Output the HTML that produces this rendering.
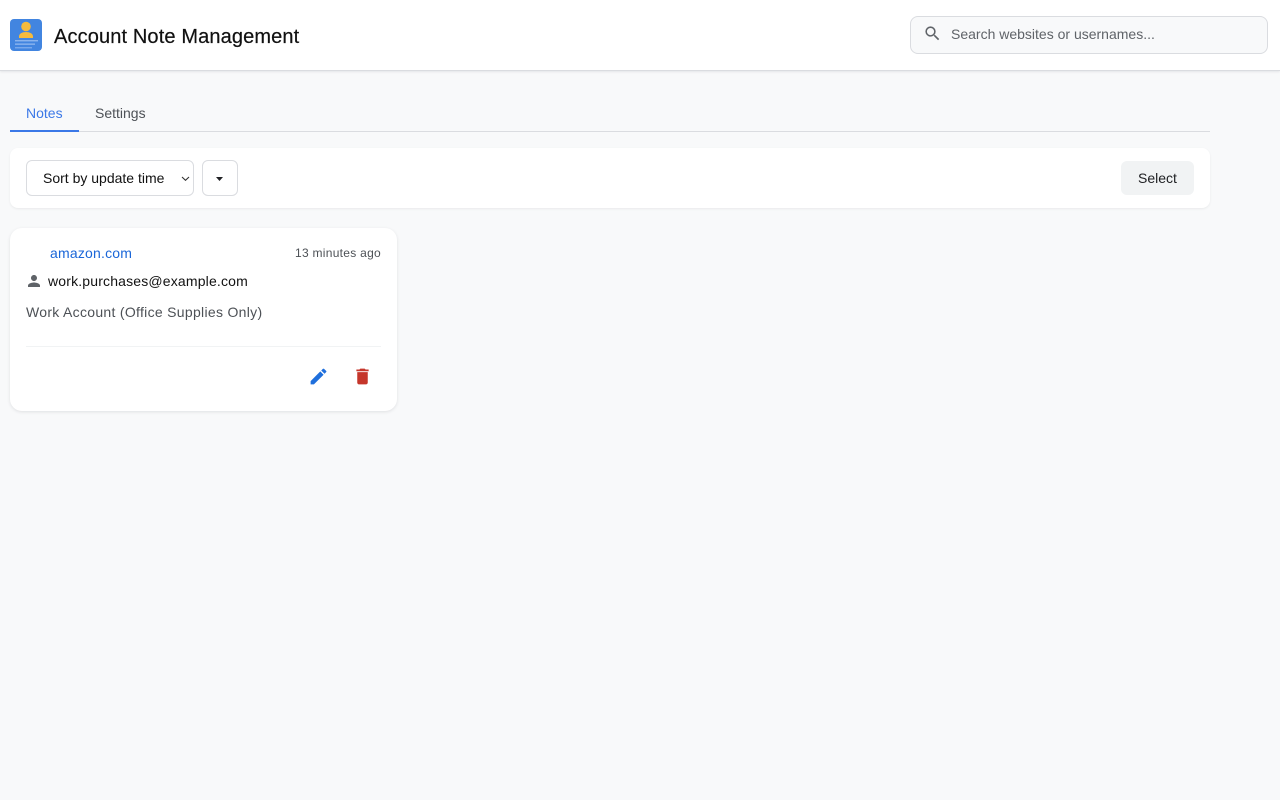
<!DOCTYPE html>
<html><head><meta charset="utf-8"><title>Account Note Management</title>
<style>
*{box-sizing:border-box}
html,body{margin:0;padding:0;width:1280px;height:800px;overflow:hidden;background:#f8f9fa;font-family:"Liberation Sans",sans-serif;color:#202124}
.abs{position:absolute;white-space:nowrap}
svg{position:absolute;display:block}
</style></head><body>
<div class="abs" style="left:0;top:0;width:1280px;height:71px;background:#fff;border-bottom:1px solid #dadce0;box-shadow:0 1px 2px rgba(60,64,67,.1)"></div>
<svg style="left:10px;top:19px" width="32" height="32" viewBox="0 0 32 32"><rect width="32" height="32" rx="4" fill="#4285e0"/><circle cx="16" cy="7.500" r="4.800" fill="#f6bb3c"/><path d="M9 19v-1.500c0-3 3.500-4.500 7-4.500s7 1.500 7 4.500V19z" fill="#f6bb3c"/><rect x="5" y="21.300" width="23" height="1" fill="#a9c8f5"/><rect x="5" y="24.600" width="20" height="1" fill="#a9c8f5"/><rect x="5" y="28.300" width="17" height="1" fill="#8fb7f0"/></svg>
<div class="abs" style="left:54px;top:25px;font-size:20px;line-height:24px;color:#111;letter-spacing:.13px;-webkit-text-stroke:.2px #111">Account Note Management</div>

<div class="abs" style="left:910px;top:16px;width:358px;height:38px;background:#f8f9fa;border:1px solid #dadce0;border-radius:8px"></div>
<svg style="left:922.500px;top:24px" width="19" height="19" viewBox="0 0 24 24"><path fill="#5f6368" d="M15.500 14h-.79l-.28-.27A6.470 6.470 0 0 0 16 9.500 6.500 6.500 0 1 0 9.500 16c1.610 0 3.090-.59 4.230-1.570l.27.28v.79l5 4.990L20.490 19l-4.990-5zm-6 0C7.010 14 5 11.990 5 9.500S7.010 5 9.500 5 14 7.010 14 9.500 11.990 14 9.500 14z"/></svg>
<div class="abs" style="left:951px;top:26px;font-size:14px;line-height:17px;color:#5f6368;letter-spacing:0">Search websites or usernames...</div>

<div class="abs" style="left:10px;top:131px;width:1200px;height:1px;background:#dadce0"></div>
<div class="abs" style="left:10px;top:130px;width:69px;height:2px;background:#3b78e7"></div>
<div class="abs" style="left:26px;top:105px;font-size:14px;line-height:17px;color:#3b78e7">Notes</div>
<div class="abs" style="left:95px;top:105px;font-size:14px;line-height:17px;color:#4d5156">Settings</div>

<div class="abs" style="left:10px;top:148px;width:1200px;height:60px;background:#fff;border-radius:8px;box-shadow:0 1px 2px rgba(60,64,67,.08)"></div>
<div class="abs" style="left:26px;top:160px;width:168px;height:36px;background:#fff;border:1px solid #dadce0;border-radius:6px"></div>
<div class="abs" style="left:43px;top:170px;font-size:14px;line-height:17px;color:#111;letter-spacing:0">Sort by update time</div>
<svg style="left:180.500px;top:176px" width="9" height="5" viewBox="0 0 9 5"><path d="M1 1l3.500 3.300L8 1" fill="none" stroke="#333" stroke-width="1.100"/></svg>
<div class="abs" style="left:201.500px;top:160px;width:36px;height:36px;background:#fff;border:1px solid #dadce0;border-radius:6px"></div>
<svg style="left:216px;top:176.500px" width="7" height="4" viewBox="0 0 7 4"><path d="M0 0h7L3.500 4z" fill="#202124"/></svg>
<div class="abs" style="left:1121px;top:161px;width:73px;height:34px;background:#f1f3f4;border-radius:6px"></div>
<div class="abs" style="left:1138px;top:170px;font-size:14px;line-height:17px;color:#202124">Select</div>

<div class="abs" style="left:10px;top:228px;width:386.500px;height:183px;background:#fff;border-radius:12px;box-shadow:0 1px 3px rgba(60,64,67,.13)"></div>
<div class="abs" style="left:50px;top:245px;font-size:14px;line-height:17px;color:#1a66d8;letter-spacing:.2px">amazon.com</div>
<div class="abs" style="left:295px;top:246px;font-size:12px;line-height:14px;color:#4d5156;letter-spacing:.28px">13 minutes ago</div>
<svg style="left:25px;top:272px" width="18" height="18" viewBox="0 0 24 24"><path fill="#5f6368" d="M12 12c2.210 0 4-1.790 4-4s-1.790-4-4-4-4 1.790-4 4 1.790 4 4 4zm0 2c-2.670 0-8 1.340-8 4v2h16v-2c0-2.660-5.330-4-8-4z"/></svg>
<div class="abs" style="left:48px;top:273px;font-size:14px;line-height:17px;color:#111;letter-spacing:.17px">work.purchases@example.com</div>
<div class="abs" style="left:26px;top:304px;font-size:14px;line-height:17px;color:#4d5156;letter-spacing:.3px">Work Account (Office Supplies Only)</div>
<div class="abs" style="left:26px;top:346px;width:355px;height:1px;background:#f1f3f4"></div>
<svg style="left:308px;top:366px" width="21" height="21" viewBox="0 0 24 24"><path fill="#1f6fdc" d="M3 17.250V21h3.750L17.810 9.940l-3.750-3.750L3 17.250zM20.710 7.040a1 1 0 0 0 0-1.410l-2.340-2.340a1 1 0 0 0-1.410 0l-1.830 1.830 3.750 3.750 1.830-1.830z"/></svg>
<svg style="left:352px;top:366px" width="21" height="21" viewBox="0 0 24 24"><path fill="#c5362b" d="M6 19c0 1.100.9 2 2 2h8c1.100 0 2-.9 2-2V7H6v12zM19 4h-3.500l-1-1h-5l-1 1H5v2h14V4z"/></svg>
</body></html>
